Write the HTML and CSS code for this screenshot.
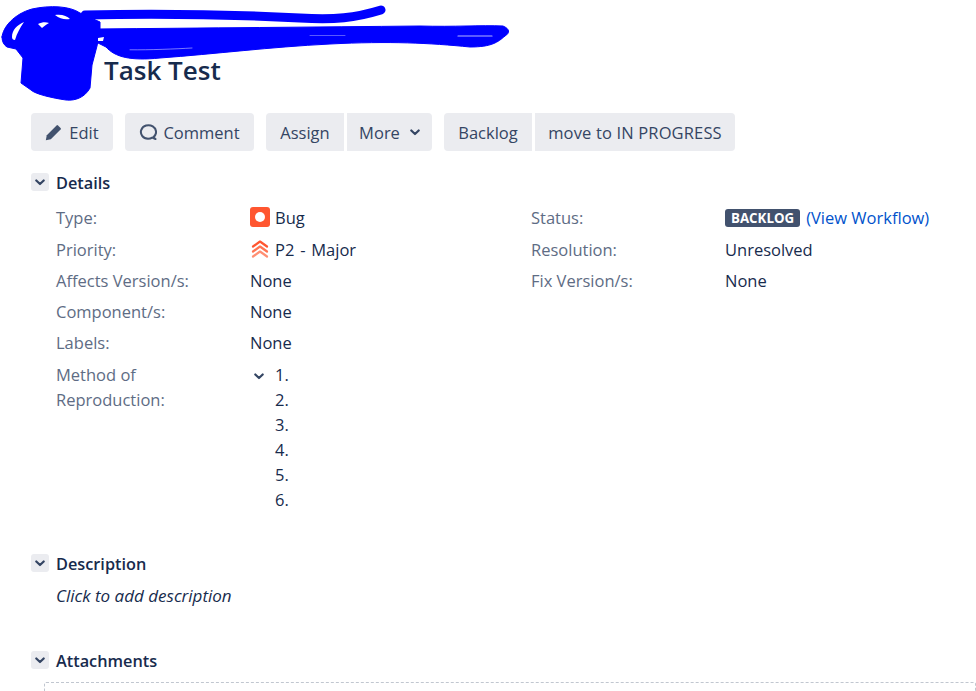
FILE: index.html
```html
<!DOCTYPE html>
<html lang="en">
<head>
<meta charset="utf-8">
<title>Task Test</title>
<link rel="stylesheet" href="styles.css">
</head>
<body>
<main class="page">
  <header class="issue-head">
    <h1 class="issue-title">Task Test</h1>
  </header>

  <div class="toolbar">
    <div class="btn-group">
      <button class="btn btn-edit"><svg class="btn-icon" viewBox="0 0 18 18"><path d="M.8 17.200l1-5L11.600 2.400a1 1 0 0 1 1.400 0l2.600 2.600a1 1 0 0 1 0 1.400L5.800 16.200z" fill="#42526e"/></svg>Edit</button>
    </div>
    <div class="btn-group">
      <button class="btn btn-comment"><svg class="btn-icon" viewBox="0 0 18 18"><path d="M14.400 14.200A7.600 6.800 0 1 0 9 15.800c1.600 0 3-.4 4.200-1.200l3.300 1.400z" fill="none" stroke="#42526e" stroke-width="2" stroke-linejoin="round"/></svg>Comment</button>
    </div>
    <div class="btn-group joined">
      <button class="btn btn-assign">Assign</button>
      <button class="btn btn-more">More<svg class="chev" viewBox="0 0 10 7"><path d="M1.300 1.500L5 5l3.700-3.500" fill="none" stroke="#344563" stroke-width="2.200" stroke-linecap="round" stroke-linejoin="round"/></svg></button>
    </div>
    <div class="btn-group joined">
      <button class="btn btn-backlog">Backlog</button>
      <button class="btn btn-progress">move to IN PROGRESS</button>
    </div>
  </div>

  <section class="module module-details">
    <h2 class="module-head"><span class="toggle"><svg class="chev" viewBox="0 0 10 7"><path d="M1.300 1.500L5 5l3.700-3.500" fill="none" stroke="#344563" stroke-width="2.200" stroke-linecap="round" stroke-linejoin="round"/></svg></span><span class="module-title">Details</span></h2>
    <div class="details">
      <dl class="col col-left">
        <div class="row row-tall"><dt>Type:</dt><dd><svg class="type-icon" viewBox="0 0 20 20"><rect width="20" height="20" rx="3" fill="#ff5630"/><circle cx="10" cy="10" r="5" fill="#fff"/></svg>Bug</dd></div>
        <div class="row"><dt>Priority:</dt><dd class="spaced"><svg class="type-icon" viewBox="0 0 20 20"><g fill="none" stroke-width="2.200" stroke-linecap="round" stroke-linejoin="round"><path d="M3 7.500L10 2.500l7 5" stroke="#ff5630"/><path d="M3 12.500L10 7.500l7 5" stroke="#ff7452"/><path d="M3 17.500L10 12.500l7 5" stroke="#ff8f73"/></g></svg>P2 - Major</dd></div>
        <div class="row"><dt>Affects Version/s:</dt><dd>None</dd></div>
        <div class="row"><dt>Component/s:</dt><dd>None</dd></div>
        <div class="row row-tall"><dt>Labels:</dt><dd>None</dd></div>
        <div class="row"><dt>Method of<br>Reproduction:</dt>
          <dd class="repro">
            <svg class="chev repro-chev" viewBox="0 0 10 7"><path d="M1.300 1.500L5 5l3.700-3.500" fill="none" stroke="#344563" stroke-width="2.200" stroke-linecap="round" stroke-linejoin="round"/></svg>
            <ol class="repro-list"><li>1.</li><li>2.</li><li>3.</li><li>4.</li><li>5.</li><li>6.</li></ol>
          </dd>
        </div>
      </dl>
      <dl class="col col-right">
        <div class="row row-tall"><dt>Status:</dt><dd><span class="lozenge">BACKLOG</span><a class="link" href="#">(View Workflow)</a></dd></div>
        <div class="row"><dt>Resolution:</dt><dd>Unresolved</dd></div>
        <div class="row"><dt>Fix Version/s:</dt><dd>None</dd></div>
      </dl>
    </div>
  </section>

  <section class="module module-description">
    <h2 class="module-head"><span class="toggle"><svg class="chev" viewBox="0 0 10 7"><path d="M1.300 1.500L5 5l3.700-3.500" fill="none" stroke="#344563" stroke-width="2.200" stroke-linecap="round" stroke-linejoin="round"/></svg></span><span class="module-title">Description</span></h2>
    <p class="desc">Click to add description</p>
  </section>

  <section class="module module-attachments">
    <h2 class="module-head"><span class="toggle"><svg class="chev" viewBox="0 0 10 7"><path d="M1.300 1.500L5 5l3.700-3.500" fill="none" stroke="#344563" stroke-width="2.200" stroke-linecap="round" stroke-linejoin="round"/></svg></span><span class="module-title">Attachments</span></h2>
    <div class="dropzone"></div>
  </section>
</main>

<svg class="scribble" viewBox="0 0 976 691" aria-hidden="true">
  <g fill="#0000ff" stroke="#0000ff" stroke-linejoin="round" stroke-linecap="round">
    <path d="M381 10C355 18 335 20 300 18C240 15 170 13 85 15" fill="none" stroke-width="9"/>
    <path d="M2 37C3 27 14 14 32 9C50 5 70 6 80 13L100 22L100 31L97 46L92 65L90 88C85 97 76 101 66 100C52 98 35 94 31 90L21 83L23 58L16 49L7 47C4 45 2 42 2 37Z" stroke-width="1"/>
    <path d="M98 29C200 28 320 27 420 26C455 27 480 25 503 26C510 29 510 33 505 36C498 42 492 47 470 47C430 43 390 41 330 44C270 47 215 54 160 58C130 61 115 57 106 47L96 42Z" stroke-width="1"/>
  </g>
  <g fill="#fff">
    <path d="M12 37C12 30 17 25 24 22C20 28 17 33 15 40C13 40 12 39 12 37Z"/>
    <path d="M38 24C42 22 46 22 49 23C46 25 44 26 42 28Z"/>
    <path d="M55 15C62 14 67 16 70 19C65 20 60 19 55 15Z"/>
    <path d="M98 38L104 37L103 41L98 41Z"/>
  </g>
  <g fill="none" stroke="#fff" stroke-linecap="round">
    <path d="M310 35.500H345" stroke-width=".7" opacity=".5"/>
    <path d="M458 36H492" stroke-width="1.200" opacity=".7"/>
    <path d="M130 49.800C150 50 175 49 192 48" stroke-width=".8" opacity=".6"/>
  </g>
</svg>
</body>
</html>
```
FILE: styles.css
```css
* { box-sizing: border-box; }
html, body { margin: 0; padding: 0; background: #fff; }
body {
  width: 976px;
  height: 691px;
  overflow: hidden;
  position: relative;
  font-family: "Open Sans", "Noto Sans", sans-serif;
  font-size: 16.5px;
  color: #172b4d;
}
.page { padding-left: 31px; }
.issue-head { height: 113px; padding: 52px 0 0 73px; }
.issue-title {
  margin: 0;
  font-size: 26px;
  line-height: 36px;
  font-weight: 600;
  color: #172b4d;
}
.toolbar { display: flex; gap: 12px; height: 38px; }
.btn-group { display: flex; gap: 3px; }
.btn {
  display: flex;
  align-items: center;
  justify-content: center;
  height: 38px;
  border: 0;
  border-radius: 4px;
  background: #ebecf0;
  color: #344563;
  font: inherit;
  padding: 0;
}
.joined .btn:first-child { border-radius: 4px 0 0 4px; }
.joined .btn:last-child { border-radius: 0 4px 4px 0; }
.btn-edit { width: 82px; }
.btn-comment { width: 129px; }
.btn-assign { width: 78px; }
.btn-more { width: 85px; }
.btn-backlog { width: 88px; }
.btn-progress { width: 200px; letter-spacing: .15px; }
.btn-icon { width: 18px; height: 18px; margin-right: 6px; }
.chev { width: 10px; height: 7px; display: block; }
.btn-more .chev { margin-left: 10px; }

.module-head {
  margin: 0;
  display: flex;
  align-items: center;
  height: 24px;
  font-size: 16.3px;
  font-weight: 600;
  color: #172b4d;
}
.module-title { padding-top: 2px; }
.toggle {
  display: flex;
  align-items: center;
  justify-content: center;
  width: 18px;
  height: 18px;
  margin-right: 7px;
  border-radius: 3px;
  background: #ebecf0;
}
.module-details { margin-top: 19px; }
.details { display: flex; margin-top: 11px; padding-left: 25px; }
.col { margin: 0; }
.col-left { width: 475px; }
.row { display: flex; line-height: 25px; min-height: 31px; }
.row-tall { min-height: 32px; }
dt { width: 194px; color: #5e6c84; }
dd { margin: 0; display: flex; align-items: flex-start; }
.spaced { word-spacing: 1.500px; }
.type-icon { width: 20px; height: 20px; margin: 2px 5px 0 0; flex: none; }
.lozenge {
  margin: 4px 6px 0 0;
  height: 18px;
  padding: 0 6px;
  border-radius: 3px;
  background: #42526e;
  color: #fff;
  font-size: 13.300px;
  font-weight: 700;
  line-height: 18px;
}
.link { color: #0052cc; text-decoration: none; }
.repro-chev { margin: 11px 0 0 4px; }
.repro-list { margin: 0 0 0 11px; padding: 0; list-style: none; }
.module-description { margin-top: 39px; }
.desc { margin: 8px 0 0 25px; line-height: 25px; font-size: 17px; font-style: italic; color: #172b4d; }
.module-attachments { margin-top: 40px; }
.dropzone {
  margin: 10px 0 0 13px;
  height: 40px;
  border: 1px dashed #c1c7d0;
  border-radius: 2px;
}
.scribble {
  position: absolute;
  left: 0;
  top: 0;
  width: 976px;
  height: 691px;
  pointer-events: none;
}
```
